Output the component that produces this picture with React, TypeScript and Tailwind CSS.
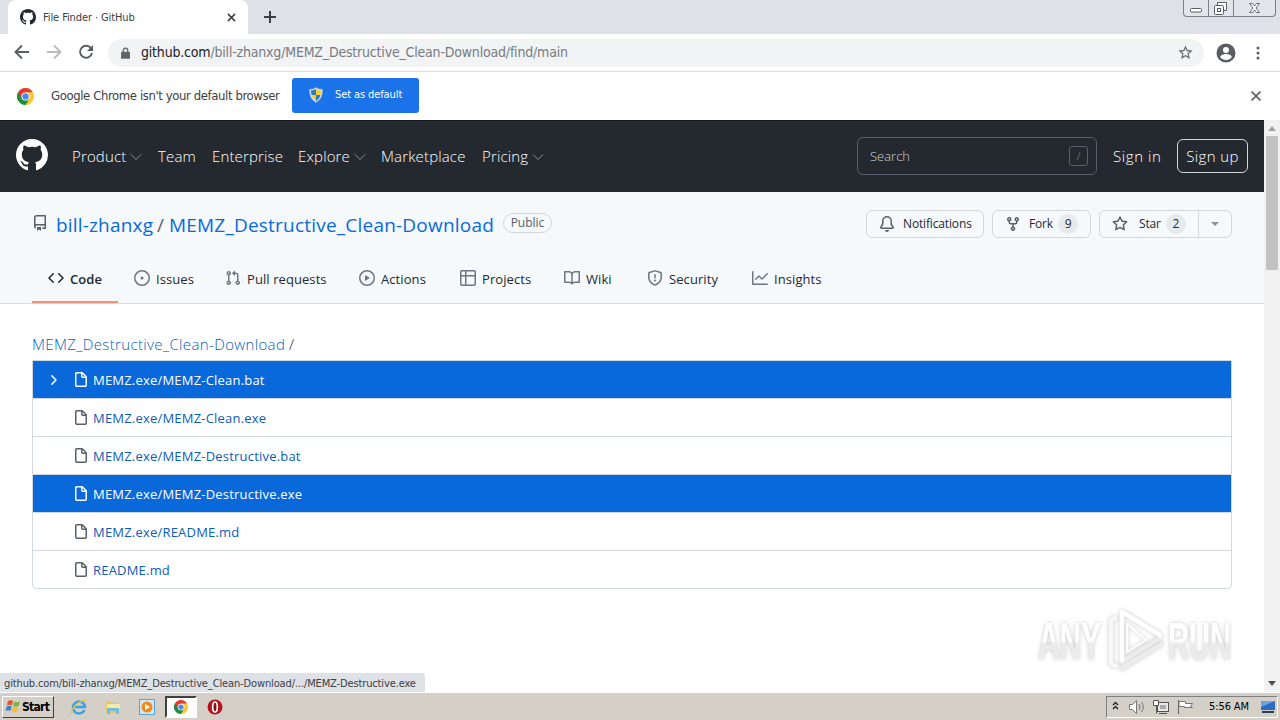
import { useState } from 'react';
import type { ReactNode } from 'react';

const icons = {
  mark: 'M8 0C3.58 0 0 3.58 0 8c0 3.54 2.29 6.53 5.47 7.59.4.07.55-.17.55-.38 0-.19-.01-.82-.01-1.49-2.01.37-2.53-.49-2.69-.94-.09-.23-.48-.94-.82-1.13-.28-.15-.68-.52-.01-.53.63-.01 1.08.58 1.23.82.72 1.21 1.87.87 2.33.66.07-.52.28-.87.51-1.07-1.78-.2-3.64-.89-3.64-3.95 0-.87.31-1.59.82-2.15-.08-.2-.36-1.02.08-2.12 0 0 .67-.21 2.2.82.64-.18 1.32-.27 2-.27.68 0 1.36.09 2 .27 1.53-1.04 2.2-.82 2.2-.82.44 1.1.16 1.92.08 2.12.51.56.82 1.27.82 2.15 0 3.07-1.87 3.75-3.65 3.95.29.25.54.73.54 1.48 0 1.07-.01 1.93-.01 2.2 0 .21.15.46.55.38A8.013 8.013 0 0016 8c0-4.42-3.58-8-8-8z',
  repo: 'M2 2.5A2.5 2.5 0 014.5 0h8.75a.75.75 0 01.75.75v12.5a.75.75 0 01-.75.75h-2.5a.75.75 0 110-1.5h1.75v-2h-8a1 1 0 00-.714 1.7.75.75 0 01-1.072 1.05A2.495 2.495 0 012 11.5v-9zm10.5-1V9h-8c-.356 0-.694.074-1 .208V2.5a1 1 0 011-1h8zM5 12.25v3.25a.25.25 0 00.4.2l1.45-1.087a.25.25 0 01.3 0L8.6 15.7a.25.25 0 00.4-.2v-3.25a.25.25 0 00-.25-.25h-3.5a.25.25 0 00-.25.25z',
  code: 'M4.72 3.22a.75.75 0 011.06 1.06L2.06 8l3.72 3.72a.75.75 0 11-1.06 1.06L.47 8.53a.75.75 0 010-1.06l4.25-4.25zm6.56 0a.75.75 0 10-1.06 1.06L13.94 8l-3.72 3.72a.75.75 0 101.06 1.06l4.25-4.25a.75.75 0 000-1.06l-4.25-4.25z',
  issue: 'M8 9.5a1.5 1.5 0 100-3 1.5 1.5 0 000 3zM8 0a8 8 0 100 16A8 8 0 008 0zM1.5 8a6.5 6.5 0 1113 0 6.5 6.5 0 01-13 0z',
  pull: 'M7.177 3.073L9.573.677A.25.25 0 0110 .854v4.792a.25.25 0 01-.427.177L7.177 3.427a.25.25 0 010-.354zM3.75 2.5a.75.75 0 100 1.5.75.75 0 000-1.5zm-2.25.75a2.25 2.25 0 113 2.122v5.256a2.251 2.251 0 11-1.5 0V5.372A2.25 2.25 0 011.5 3.25zM11 2.5h-1V4h1a1 1 0 011 1v5.628a2.251 2.251 0 101.5 0V5A2.5 2.5 0 0011 2.5zm1 10.25a.75.75 0 111.5 0 .75.75 0 01-1.5 0zM3.75 12a.75.75 0 100 1.5.75.75 0 000-1.5z',
  play: 'M1.5 8a6.5 6.5 0 1113 0 6.5 6.5 0 01-13 0zM8 0a8 8 0 100 16A8 8 0 008 0zM6.379 5.227A.25.25 0 006 5.442v5.117a.25.25 0 00.379.214l4.264-2.559a.25.25 0 000-.428L6.379 5.227z',
  table: 'M0 1.75C0 .784.784 0 1.75 0h12.5C15.216 0 16 .784 16 1.75v3.585a.746.746 0 010 .83v8.085A1.75 1.75 0 0114.25 16H6.309a.748.748 0 01-1.118 0H1.75A1.75 1.75 0 010 14.25V6.165a.746.746 0 010-.83V1.75zM1.5 6.5v7.75c0 .138.112.25.25.25H5v-8H1.5zM5 5H1.5V1.75a.25.25 0 01.25-.25H5V5zm1.5 1.5v8h7.75a.25.25 0 00.25-.25V6.5h-8zm8-1.5h-8V1.5h7.75a.25.25 0 01.25.25V5z',
  book: 'M0 1.75A.75.75 0 01.75 1h4.253c1.227 0 2.317.59 3 1.501A3.744 3.744 0 0111.006 1h4.245a.75.75 0 01.75.75v10.5a.75.75 0 01-.75.75h-4.507a2.25 2.25 0 00-1.591.659l-.622.621a.75.75 0 01-1.06 0l-.622-.621A2.25 2.25 0 005.258 13H.75a.75.75 0 01-.75-.75V1.75zm8.755 3a2.25 2.25 0 012.25-2.25H14.5v9h-3.757c-.71 0-1.4.201-1.992.572l.004-7.322zm-1.504 7.324l.004-5.073-.002-2.253A2.25 2.25 0 005.003 2.5H1.5v9h3.757a3.75 3.75 0 011.994.574z',
  shield: 'M7.467.133a1.75 1.75 0 011.066 0l5.25 1.68A1.75 1.75 0 0115 3.48V7c0 1.566-.32 3.182-1.303 4.682-.983 1.498-2.585 2.813-5.032 3.855a1.7 1.7 0 01-1.33 0c-2.447-1.042-4.049-2.357-5.032-3.855C1.32 10.182 1 8.566 1 7V3.48a1.75 1.75 0 011.217-1.667l5.25-1.68zm.61 1.429a.25.25 0 00-.153 0l-5.25 1.68a.25.25 0 00-.174.238V7c0 1.358.275 2.666 1.057 3.86.784 1.194 2.121 2.34 4.366 3.297a.2.2 0 00.154 0c2.245-.956 3.582-2.104 4.366-3.298C13.225 9.666 13.5 8.36 13.5 7V3.48a.25.25 0 00-.174-.237l-5.25-1.68zM9 10.5a1 1 0 11-2 0 1 1 0 012 0zm-.25-5.75a.75.75 0 10-1.5 0v3a.75.75 0 001.5 0v-3z',
  graph: 'M1.5 1.75a.75.75 0 00-1.5 0v12.5c0 .414.336.75.75.75h14.5a.75.75 0 000-1.5H1.5V1.75zm14.28 2.53a.75.75 0 00-1.06-1.06L10 7.94 7.53 5.47a.75.75 0 00-1.06 0L3.22 8.72a.75.75 0 001.06 1.06L7 7.06l2.47 2.47a.75.75 0 001.06 0l5.25-5.25z',
  bell: 'M8 16a2 2 0 001.985-1.75c.017-.137-.097-.25-.235-.25h-3.5c-.138 0-.252.113-.235.25A2 2 0 008 16zM8 1.5A3.5 3.5 0 004.5 5v2.947c0 .346-.102.683-.294.97l-1.703 2.556a.018.018 0 00-.003.01l.001.006c0 .002.002.004.004.006a.017.017 0 00.006.004l.007.001h10.964l.007-.001a.016.016 0 00.006-.004.016.016 0 00.004-.006l.001-.007a.017.017 0 00-.003-.01l-1.703-2.554a1.75 1.75 0 01-.294-.97V5A3.5 3.5 0 008 1.5zM3 5a5 5 0 0110 0v2.947c0 .05.015.098.042.139l1.703 2.555A1.518 1.518 0 0113.482 13H2.518a1.518 1.518 0 01-1.263-2.36l1.703-2.554A.25.25 0 003 7.947V5z',
  fork: 'M5 3.25a.75.75 0 11-1.5 0 .75.75 0 011.5 0zm0 2.122a2.25 2.25 0 10-1.5 0v.878A2.25 2.25 0 005.75 8.5h1.5v2.128a2.251 2.251 0 101.5 0V8.5h1.5a2.25 2.25 0 002.25-2.25v-.878a2.25 2.25 0 10-1.5 0v.878a.75.75 0 01-.75.75h-4.5A.75.75 0 015 6.25v-.878zm3.75 7.378a.75.75 0 11-1.5 0 .75.75 0 011.5 0zm3-8.75a.75.75 0 100-1.5.75.75 0 000 1.5z',
  star: 'M8 .25a.75.75 0 01.673.418l1.882 3.815 4.21.612a.75.75 0 01.416 1.279l-3.046 2.97.719 4.192a.75.75 0 01-1.088.791L8 12.347l-3.766 1.98a.75.75 0 01-1.088-.79l.72-4.194L.818 6.374a.75.75 0 01.416-1.28l4.21-.611L7.327.668A.75.75 0 018 .25zm0 2.445L6.615 5.5a.75.75 0 01-.564.41l-3.097.45 2.24 2.184a.75.75 0 01.216.664l-.528 3.084 2.769-1.456a.75.75 0 01.698 0l2.77 1.456-.53-3.084a.75.75 0 01.216-.664l2.24-2.183-3.096-.45a.75.75 0 01-.564-.41L8 2.694v.001z',
  file: 'M3.75 1.5a.25.25 0 00-.25.25v11.5c0 .138.112.25.25.25h8.5a.25.25 0 00.25-.25V6H9.75A1.75 1.75 0 018 4.25V1.5H3.75zm5.75.56v2.19c0 .138.112.25.25.25h2.19L9.5 2.06zM2 1.75C2 .784 2.784 0 3.75 0h5.086c.464 0 .909.184 1.237.513l3.414 3.414c.329.328.513.773.513 1.237v8.086A1.75 1.75 0 0112.25 15h-8.5A1.75 1.75 0 012 13.25V1.75z',
  chevron: 'M6.22 3.22a.75.75 0 011.06 0l4.25 4.25a.75.75 0 010 1.06l-4.25 4.25a.75.75 0 01-1.06-1.06L9.94 8 6.22 4.28a.75.75 0 010-1.06z',
};

type IconName = keyof typeof icons;

function Octicon({ name, className = 'size-4' }: { name: IconName; className?: string }) {
  return (
    <svg viewBox="0 0 16 16" fill="currentColor" fillRule="evenodd" className={`shrink-0 ${className}`}>
      <path d={icons[name]} />
    </svg>
  );
}

function ChromeLogo({ className }: { className: string }) {
  return (
    <svg viewBox="0 0 48 48" className={`shrink-0 ${className}`}>
      <path d="M24 24 3.2 12A24 24 0 0 1 44.8 12Z" fill="#e33b2e" />
      <path d="M24 24 44.8 12A24 24 0 0 1 24 48Z" fill="#fcc934" />
      <path d="M24 24 24 48A24 24 0 0 1 3.2 12Z" fill="#1e8e3e" />
      <path d="M24 12H44.8L42 24H34Z" fill="#fcc934" />
      <path d="M34.4 30 24 48 17 44 24 35Z" fill="#1e8e3e" />
      <path d="M13.6 30 3.2 12 10 8 15 17Z" fill="#e33b2e" />
      <circle cx="24" cy="24" r="11.5" fill="#fff" />
      <circle cx="24" cy="24" r="9" fill="#4a8af0" />
    </svg>
  );
}

function TabStrip() {
  return (
    <div className="flex h-[34px] bg-[#dee1e8] pl-2">
      <div className="flex h-full w-60 items-center rounded-t-lg bg-white pl-3">
        <Octicon name="mark" className="size-4 text-[#24292f]" />
        <span className="ml-[7px] w-[180px] whitespace-nowrap pt-0.5 text-[11px] tracking-[-0.1px] text-[#3c4043]">File Finder · GitHub</span>
        <svg viewBox="0 0 10 10" className="ml-1 size-[9px]" stroke="#3c4043" strokeWidth="1.7">
          <path d="M1 1l8 8M9 1L1 9" />
        </svg>
      </div>
      <svg viewBox="0 0 12 12" className="ml-4 mt-[11px] size-3" stroke="#3c4043" strokeWidth="2">
        <path d="M6 0v12M0 6h12" />
      </svg>
      <div className="ml-auto mr-1 flex h-[17px] w-[93px] rounded-b-[4px] border border-t-0 border-[#7c8088] bg-[#e3e5ea]">
        <svg viewBox="0 0 91 16" className="h-4 w-[91px]" fill="none" stroke="#5a5d64">
          <path d="M24.5 0v16M49.5 0v16" stroke="#7c8088" />
          <rect x="6.5" y="8.5" width="11" height="3.5" rx="1" fill="#fff" />
          <path d="M33.5 5v-2.500h9v8h-3" fill="#fff" />
          <rect x="30.5" y="5.5" width="9" height="9" rx="1" fill="#fff" />
          <rect x="33.5" y="8.5" width="3" height="3" />
          <path d="M65.500 3.500h3l2 2.500 2-2.500h3l-3.500 4.500 3.500 4.500h-3l-2-2.500-2 2.500h-3l3.500-4.500z" fill="#fff" strokeWidth=".9" />
        </svg>
      </div>
    </div>
  );
}

function Toolbar() {
  return (
    <div className="flex h-[38px] items-center border-b border-[#dadce0] bg-white">
      <svg viewBox="0 0 108 38" className="h-[38px] w-[108px] shrink-0" fill="none" strokeWidth="1.9">
        <path d="M29 18H16M22 11.5l-6.500 6.500 6.500 6.500" stroke="#5a5d61" />
        <path d="M47 18h13M54 11.5l6.500 6.500-6.500 6.500" stroke="#b9bbbe" />
        <path d="M91 14.200a6 6 0 1 0 1 4.800" stroke="#5a5d61" />
        <path d="M93 11v6h-6z" fill="#5a5d61" />
      </svg>
      <div className="flex h-7 w-[1096px] items-center rounded-full bg-[#f1f3f4] pl-[13px] pr-2.5">
        <svg viewBox="0 0 10 13" className="h-3 w-[9px]">
          <rect y="5" width="10" height="8" rx="1" fill="#5f6368" />
          <path d="M2.500 6V3.500a2.500 2.500 0 0 1 5 0V6" fill="none" stroke="#5f6368" strokeWidth="1.4" />
        </svg>
        <span className="ml-[11px] whitespace-nowrap text-[14px] tracking-[-0.19px] text-[#777b80]">
          <span className="text-[#202124]">github.com</span>/bill-zhanxg/MEMZ_Destructive_Clean-Download/find/main
        </span>
        <svg viewBox="0 0 24 24" className="ml-auto size-[17px]" fill="#5f6368">
          <path d="M22 9.240l-7.190-.620L12 2 9.190 8.630 2 9.240l5.460 4.730L5.820 21 12 17.270 18.180 21l-1.630-7.030L22 9.240zM12 15.400l-3.760 2.270 1-4.280-3.320-2.880 4.380-.380L12 6.100l1.710 4.040 4.380.380-3.320 2.880 1 4.280L12 15.400z" />
        </svg>
      </div>
      <svg viewBox="0 0 20 20" className="ml-3 size-5">
        <circle cx="10" cy="10" r="9.5" fill="#5a5d61" />
        <circle cx="10" cy="7" r="3" fill="#fff" />
        <path d="M4.200 14c0-2 3.800-3 5.800-3s5.800 1 5.800 3a7 7 0 0 1-11.600 0z" fill="#fff" />
      </svg>
      <svg viewBox="0 0 4 14" className="ml-5 h-[14px] w-1" fill="#5a5d61">
        <circle cx="2" cy="2" r="1.5" />
        <circle cx="2" cy="7" r="1.5" />
        <circle cx="2" cy="12" r="1.5" />
      </svg>
    </div>
  );
}

function InfoBar({ onClose }: { onClose: () => void }) {
  return (
    <div className="flex h-12 items-center bg-white pl-[17px] pr-[19px]">
      <ChromeLogo className="size-[17px]" />
      <span className="ml-[17px] w-[241px] whitespace-nowrap text-[13px] tracking-[-0.4px] text-[#3c4043]">Google Chrome isn't your default browser</span>
      <button className="-mt-0.5 flex h-[35px] w-[127px] items-center rounded-[3px] bg-[#1a73e8] pl-4 text-white">
        <svg viewBox="0 0 16 16" className="size-4">
          <path d="M8 .5C6 2 4 2.300 1.500 2.300c0 6 1.500 10.500 6.500 13.200 5-2.700 6.500-7.200 6.500-13.200C12 2.300 10 2 8 .5z" fill="#d9e3ef" stroke="#9fb4cc" strokeWidth=".6" />
          <path d="M8 2C6.500 3 5 3.400 3 3.500c0 1.700.2 3.200.6 4.500H8z" fill="#3179c4" />
          <path d="M8 2c1.500 1 3 1.400 5 1.500 0 1.700-.2 3.200-.6 4.500H8z" fill="#f5cf2e" />
          <path d="M3.600 8c.8 3 2.200 4.800 4.400 6.200V8z" fill="#f5cf2e" />
          <path d="M12.400 8c-.8 3-2.200 4.800-4.400 6.200V8z" fill="#3179c4" />
        </svg>
        <span className="ml-[11px] whitespace-nowrap pt-px text-[11px] tracking-[-0.1px]">Set as default</span>
      </button>
      <button className="ml-auto" onClick={onClose}>
        <svg viewBox="0 0 10 10" className="size-[10px]" stroke="#5f6368" strokeWidth="1.7">
          <path d="M.5.5l9 9M9.500.5l-9 9" />
        </svg>
      </button>
    </div>
  );
}

const navLinks = [
  { label: 'Product', menu: true, className: 'w-[86px]' },
  { label: 'Team', menu: false, className: 'w-[54px]' },
  { label: 'Enterprise', menu: false, className: 'w-[86px]' },
  { label: 'Explore', menu: true, className: 'w-[83px]' },
  { label: 'Marketplace', menu: false, className: 'w-[101px]' },
  { label: 'Pricing', menu: true, className: 'w-[80px]' },
];

function SiteHeader() {
  return (
    <header className="flex h-[72px] items-center border-t border-[#15191d] bg-[#24292f] px-4 text-[15px] font-light text-white">
      <Octicon name="mark" className="-mt-1 size-8" />
      <nav className="ml-6 flex tracking-[0.15px]">
        {navLinks.map((link) => (
          <a key={link.label} className={`flex items-center whitespace-nowrap ${link.className}`}>
            {link.label}
            {link.menu && (
              <svg viewBox="0 0 12 8" className="ml-1 h-2 w-3" fill="none" stroke="#8b8f94">
                <path d="M1 1.500l5 5 5-5" />
              </svg>
            )}
          </a>
        ))}
      </nav>
      <div className="-mt-px ml-auto flex h-[38px] w-60 items-center justify-between rounded-md border border-[#57606a] pl-3 pr-2 text-[13px] text-[#d0d4d8]">
        <span className="pt-0.5">Search</span>
        <span className="flex h-5 w-[19px] items-center justify-center rounded-[3px] border border-[#57606a] text-[11px] text-[#8b949e]">/</span>
      </div>
      <a className="ml-4 w-16 whitespace-nowrap tracking-[0.6px]">Sign in</a>
      <a className="-mt-px flex h-[34px] w-[71px] items-center justify-center whitespace-nowrap rounded-md border border-[#d0d7de] tracking-[0.4px]">Sign up</a>
    </header>
  );
}

function ActionButton({ icon, label, count, className }: { icon: IconName; label: string; count?: number; className: string }) {
  return (
    <button className={`flex h-7 items-center whitespace-nowrap pl-3 text-[12px] tracking-[-0.15px] text-[#24292f] ${className}`}>
      <Octicon name={icon} className="mr-2 size-4 text-[#57606a]" />
      <span className={icon === 'star' ? 'ml-[3px]' : ''}>{label}</span>
      {count !== undefined && <span className="ml-[5px] flex size-5 items-center justify-center rounded-full bg-[#e7eaed]">{count}</span>}
    </button>
  );
}

const tabs: { icon: IconName; label: string; className: string }[] = [
  { icon: 'code', label: 'Code', className: 'w-[86px]' },
  { icon: 'issue', label: 'Issues', className: 'w-[91px]' },
  { icon: 'pull', label: 'Pull requests', className: 'w-[134px]' },
  { icon: 'play', label: 'Actions', className: 'w-[101px]' },
  { icon: 'table', label: 'Projects', className: 'w-[104px]' },
  { icon: 'book', label: 'Wiki', className: 'w-[83px]' },
  { icon: 'shield', label: 'Security', className: 'w-[105px]' },
  { icon: 'graph', label: 'Insights', className: 'w-[103px]' },
];

function RepoHead() {
  return (
    <div className="flex h-28 flex-col border-b border-[#d8dee4] bg-[#f5f9fc] px-8">
      <div className="mt-[18px] flex h-7 items-center">
        <Octicon name="repo" className="-mt-0.5 size-4 text-[#57606a]" />
        <div className="ml-2 flex items-center whitespace-nowrap pt-0.5 text-[19px] tracking-[0.18px] text-[#0969da]">
          <span className="w-[101px]">bill-zhanxg</span>
          <span className="w-3 text-[#57606a]">/</span>
          <span className="w-[334px] font-medium tracking-[0.21px]">MEMZ_Destructive_Clean-Download</span>
        </div>
        <span className="-mt-0.5 flex h-5 w-[49px] items-center justify-center rounded-full border border-[#d0d7de] text-[12px] text-[#57606a]">Public</span>
        <div className="ml-auto flex gap-2">
          <ActionButton icon="bell" label="Notifications" className="w-[118px] rounded-md border border-[#d5d8da]" />
          <ActionButton icon="fork" label="Fork" count={9} className="w-[99px] rounded-md border border-[#d5d8da]" />
          <div className="flex">
            <ActionButton icon="star" label="Star" count={2} className="w-[100px] rounded-l-md border border-[#d5d8da]" />
            <button className="-ml-px flex h-7 w-[34px] items-center justify-center rounded-r-md border border-[#d5d8da]">
              <span className="border-x-4 border-t-4 border-x-transparent border-t-[#8b9096]" />
            </button>
          </div>
        </div>
      </div>
      <nav className="mt-auto flex h-[49px]">
        {tabs.map((tab, i) => (
          <a
            key={tab.label}
            className={`flex items-center whitespace-nowrap border-b-2 pl-4 text-[13px] tracking-[0.08px] text-[#24292f] ${tab.className} ${i === 0 ? 'border-[#fd8c73] font-semibold' : 'border-transparent'}`}
          >
            <Octicon name={tab.icon} className={`mr-[6px] size-4 ${i === 0 ? 'text-[#24292f]' : 'text-[#6e7781]'}`} />
            <span className="pt-1">{tab.label}</span>
          </a>
        ))}
      </nav>
    </div>
  );
}

const files = [
  'MEMZ.exe/MEMZ-Clean.bat',
  'MEMZ.exe/MEMZ-Clean.exe',
  'MEMZ.exe/MEMZ-Destructive.bat',
  'MEMZ.exe/MEMZ-Destructive.exe',
  'MEMZ.exe/README.md',
  'README.md',
];

function FileFinder() {
  const [focused] = useState(0);
  const [hovered, setHovered] = useState(3);

  return (
    <main className="px-8 pt-[27px]">
      <div className="mb-0.5 flex h-[27px] items-center whitespace-nowrap text-[15px] font-light tracking-[0.36px] text-[#24292f]">
        <span className="w-[257px] text-[#075cc0]">MEMZ_Destructive_Clean-Download</span>/
      </div>
      <ul className="rounded-b-sm border border-[#d0d7de]">
        {files.map((file, i) => {
          const active = i === focused || i === hovered;
          return (
            <li
              key={file}
              onMouseEnter={() => setHovered(i)}
              className={`flex items-center whitespace-nowrap pl-3 text-[13px] ${i > 0 ? 'h-[38px] border-t border-[#d0d7de]' : 'h-[37px]'} ${active ? 'bg-[#0969da] text-white' : 'text-[#0b5cbd]'}`}
            >
              <span className="w-7 pt-px">{i === focused && <Octicon name="chevron" />}</span>
              <Octicon name="file" className={`mr-1 mt-px size-4 ${active ? 'text-white' : 'text-[#57606a]'}`} />
              <span className="pt-0.5 tracking-[0.2px]">{file}</span>
            </li>
          );
        })}
      </ul>
    </main>
  );
}

function ScrollBar() {
  return (
    <div className="flex w-4 flex-col items-center bg-[#f1f1f1]">
      <svg viewBox="0 0 16 16" className="size-4" fill="#a3a3a3">
        <path d="M4 11h8L8 6z" />
      </svg>
      <div className="h-[134px] w-3 bg-[#c1c1c1]" />
      <svg viewBox="0 0 16 16" className="mt-auto size-4" fill="#505050">
        <path d="M4 5h8l-4 5z" />
      </svg>
    </div>
  );
}

function Watermark() {
  return (
    <svg viewBox="0 0 210 75" className="absolute bottom-[12px] right-[40px] h-[75px] w-[210px] drop-shadow-[0_0_2px_rgba(0,0,0,0.22)]">
      <defs>
        <linearGradient id="fade" x1="0" x2="0" y1="0" y2="1">
          <stop offset="0.48" stopColor="#ffffff" />
          <stop offset="0.55" stopColor="#ebebeb" />
        </linearGradient>
      </defs>
      <g fill="url(#fade)" fontFamily="'Liberation Sans Narrow', 'Liberation Sans'" fontWeight="bold" fontSize="51">
        <text x="8" y="54" textLength="63" lengthAdjust="spacingAndGlyphs">ANY</text>
        <text x="138" y="54" textLength="63" lengthAdjust="spacingAndGlyphs">RUN</text>
      </g>
      <g fill="none" strokeWidth="4.5" strokeLinejoin="round" strokeLinecap="round">
        <path d="M85 13l-4 2v44l5 2" stroke="#f8f8f8" />
        <path d="M92 63l39-24M92 57l38-24" stroke="#ececec" />
        <path d="M92 55V7l38 23" stroke="#fff" />
        <path d="M97 19v28l19-12z" stroke="#fdfdfd" strokeWidth="2" />
      </g>
    </svg>
  );
}

function TaskButton({ children, active = false }: { children: ReactNode; active?: boolean }) {
  return (
    <div className={`flex h-[22px] w-8 items-center justify-center ${active ? 'border-2 border-b-white border-l-[#404040] border-r-white border-t-[#404040] bg-white' : ''}`}>
      {children}
    </div>
  );
}

function Taskbar() {
  return (
    <footer className="flex h-7 items-center border-t border-white bg-[#d4d0c8] text-[11px] text-black">
      <button className="ml-0.5 flex h-[22px] w-[52px] items-center border border-b-[#404040] border-l-white border-r-[#404040] border-t-white pl-0.5 font-bold">
        <svg viewBox="0 0 16 15" className="mr-px h-[15px] w-4 shrink-0">
          <path d="M3 2c2-1.300 3.500-1 5 0L7 6.500c-1.500-1-3-1-5 0z" fill="#e8532a" />
          <path d="M9 2.500c1.500 1 3.300 1 6 0L13.700 7c-2 1-4 1-5.500 0z" fill="#7cb342" />
          <path d="M1.700 7.500c2-1 3.500-1 5 0l-1.200 4.500c-1.500-1-3-1-5 0z" fill="#3d7fd0" />
          <path d="M7.900 8c1.600 1 3.500 1 5.500 0l-1.200 4.500c-2 1-4 1-5.500 0z" fill="#f7bf2d" />
        </svg>
        <span className="text-[12px] tracking-[-0.7px]">Start</span>
      </button>
      <div className="ml-[9px] flex gap-0.5">
        <TaskButton>
          <svg viewBox="0 0 18 18" className="size-[18px]" fill="none">
            <path d="M14.500 12A6 6 0 1 1 15 9H5" stroke="#3ba3e0" strokeWidth="2.4" />
            <path d="M2 16C-1 12 10 1 16.500 2.500" stroke="#edc04a" strokeWidth="1.3" />
          </svg>
        </TaskButton>
        <TaskButton>
          <svg viewBox="0 0 18 18" className="size-[18px]">
            <path d="M2 3h5l1 2h7v10H2z" fill="#e8c660" />
            <path d="M3 6h13v5H3z" fill="#f8e9a8" />
            <path d="M3 10h12v6h-3v-3H6v3H3z" fill="#73bde0" />
          </svg>
        </TaskButton>
        <TaskButton>
          <svg viewBox="0 0 16 16" className="size-4">
            <rect x=".5" y=".5" width="15" height="15" fill="#cfe7f7" stroke="#5aa0d0" />
            <circle cx="8" cy="8" r="5.5" fill="#f08a1d" />
            <path d="M6 5l5 3-5 3z" fill="#fff" />
          </svg>
        </TaskButton>
        <TaskButton active>
          <ChromeLogo className="size-[14px]" />
        </TaskButton>
        <TaskButton>
          <svg viewBox="0 0 16 16" className="size-4">
            <circle cx="8" cy="8" r="7.5" fill="#b5131b" />
            <ellipse cx="8" cy="8" rx="2.3" ry="5" fill="#8a0c12" stroke="#fff" strokeWidth="1.7" />
          </svg>
        </TaskButton>
      </div>
      <div className="ml-auto mr-0.5 flex h-[22px] w-[172px] items-center border border-b-white border-l-[#808080] border-r-white border-t-[#808080]">
        <svg viewBox="0 0 90 20" className="h-5 w-[90px] shrink-0" fill="none" stroke="#777" strokeWidth="1">
          <path d="M6 8l2.500-2.500L11 8M6 12l2.500-2.500L11 12" stroke="#222" strokeWidth="1.4" />
          <path d="M22.500 7.500h3l4-4v13l-4-4h-3z" fill="#fff" />
          <path d="M32 7q2 3 0 6M34.500 5q3.500 5 0 10" />
          <rect x="50.5" y="5.5" width="11" height="9" fill="#e8e8e8" stroke="#555" />
          <rect x="53" y="8" width="6" height="4" fill="#aaa" stroke="none" />
          <path d="M46.500 3.500h5v5h-5zM49.500 8v8.500M52 16.500h8" stroke="#555" fill="#fff" />
          <path d="M71.500 3v14" stroke="#666" />
          <path d="M72 4.500h6.500v2h7l-2 3 2 1h-8v-1h-5.500z" fill="#fff" />
        </svg>
        <span className="ml-3 w-12 whitespace-nowrap pt-0.5 tracking-[-0.1px]">5:56 AM</span>
        <svg viewBox="0 0 16 16" className="ml-[3px] size-4 shrink-0">
          <path d="M1 2h14v9H1z" fill="#2d6cc0" />
          <path d="M1 2h14L1 8z" fill="#6ba5e4" />
          <path d="M2 12h12v2H2z" fill="#27405e" />
        </svg>
      </div>
    </footer>
  );
}

export default function App() {
  const [showInfo, setShowInfo] = useState(true);

  return (
    <div className="flex h-[720px] w-[1280px] flex-col overflow-hidden bg-white font-['DejaVu_Sans_Condensed','DejaVu_Sans',sans-serif]">
      <TabStrip />
      <Toolbar />
      {showInfo && <InfoBar onClose={() => setShowInfo(false)} />}
      <div className="relative flex min-h-0 flex-1">
        <div className="w-[1264px] font-['Open_Sans','Noto_Sans',sans-serif]">
          <SiteHeader />
          <RepoHead />
          <FileFinder />
        </div>
        <ScrollBar />
        <Watermark />
        {/* Link target preview */}
        <div className="absolute bottom-0 left-0 flex h-[19px] w-[425px] items-center whitespace-nowrap rounded-tr-[4px] bg-[#dee1e6] pl-1 pt-[3px] text-[11px] tracking-[-0.13px] text-[#3c4043]">
          github.com/bill-zhanxg/MEMZ_Destructive_Clean-Download/.../MEMZ-Destructive.exe
        </div>
      </div>
      <Taskbar />
    </div>
  );
}
